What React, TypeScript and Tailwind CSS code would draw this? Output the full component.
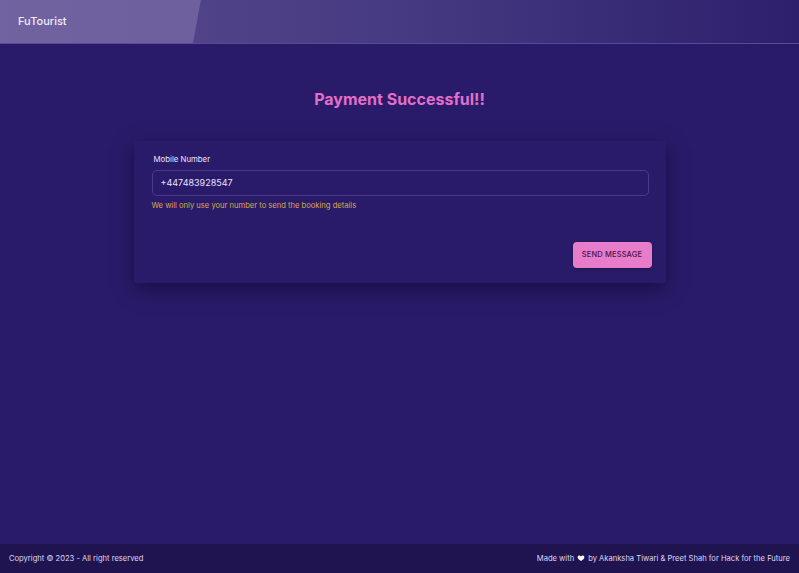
import React from "react";

export default function App() {
  return (
    <div
      className="flex min-h-[573px] w-full flex-col bg-[#2a1b6a] text-white"
      style={{ fontFamily: "Inter, 'Noto Sans', sans-serif" }}
    >
      {/* top bar */}
      <header className="relative h-[44px] overflow-hidden border-b border-[#5a4a95] bg-gradient-to-r from-[#5a4b8f] via-[#463a82] to-[#2e1f6c]">
        <div
          className="absolute inset-y-0 left-0 w-[201px] bg-[#7b6ca6]/70"
          style={{ clipPath: "polygon(0 0, 100% 0, 96% 100%, 0 100%)" }}
        />
        <div className="relative flex h-full items-center pl-[18px]">
          <span className="text-[11px] font-medium text-[#f1ecff]">FuTourist</span>
        </div>
      </header>

      <main className="flex flex-1 flex-col items-center">
        <h1 className="mt-[43px] text-[16px] font-bold text-[#e36ec8]">Payment Successful!!</h1>

        <div className="mt-[30px] w-[532px] bg-[#2a1b6a] px-[18px] pb-[15px] pt-[13px] shadow-[0_6px_18px_rgba(10,4,40,0.55)]">
          <label className="ml-[2px] block text-[7.8px] text-[#e8e2ff]">Mobile Number</label>
          <div className="mt-[4px] flex h-[26px] w-[497px] items-center rounded-[5px] border border-[#4a3b8a] px-[8px]">
            <span className="text-[9px] text-[#e8e2ff]">+447483928547</span>
          </div>
          <p className="mt-[4px] text-[7.6px] text-[#d8a94a]">We will only use your number to send the booking details</p>
          <div className="mt-[31px] flex justify-end">
            <button className="-mr-[4px] h-[26px] w-[79px] rounded-[4px] bg-[#e77ccb] text-[7.5px] font-medium tracking-[0.02em] text-[#4a1549] shadow-[0_1px_3px_rgba(0,0,0,0.3)]">
              SEND MESSAGE
            </button>
          </div>
        </div>
      </main>

      <footer className="flex h-[29px] items-center justify-between bg-[#1f1450] px-[9px] text-[7.6px] text-[#ddd6f5]">
        <span>Copyright © 2023 - All right reserved</span>
        <span className="flex items-center gap-[2px]">
          Made with
          <svg width="8" height="8" viewBox="0 0 24 24" className="mx-[1px]" fill="#ffffff">
            <path d="M12 21s-7.5-4.6-9.6-9.2C.9 8.5 2.8 4.5 6.6 4.5c2.3 0 3.9 1.3 5.4 3.2 1.5-1.9 3.1-3.2 5.4-3.2 3.8 0 5.7 4 4.2 7.3C19.5 16.4 12 21 12 21z" />
          </svg>
          by Akanksha Tiwari &amp; Preet Shah for Hack for the Future
        </span>
      </footer>
    </div>
  );
}
